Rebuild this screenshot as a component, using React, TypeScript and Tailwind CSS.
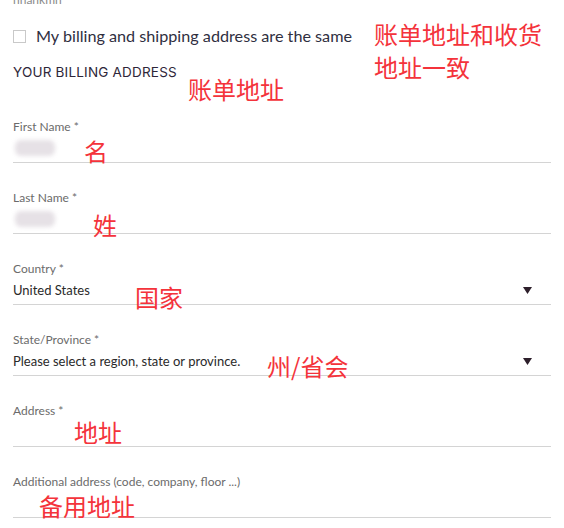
import React from 'react';

interface FieldProps {
  label: string;
  value?: string;
  select?: boolean;
  blurred?: boolean;
}

function Caret() {
  return (
    <svg width="9" height="7" viewBox="0 0 9 7" className="shrink-0">
      <path d="M0 0 H9 L4.5 7 Z" fill="#2d1f2b" />
    </svg>
  );
}

function Field({ label, value, select = false, blurred = false }: FieldProps) {
  return (
    <div className="mt-[27px] first:mt-0">
      <div className="h-4 text-[12px] leading-4 text-[#6b6b6b]">{label}</div>
      <div className="flex h-[28px] items-center justify-between border-b border-[#d4d4d4] pr-[19px]">
        {blurred ? (
          <div className="relative h-full w-[50px]">
            <div className="absolute left-[2px] top-[5px] h-[16px] w-[40px] rounded-md bg-[#e6e1e6] blur-[2px]" />
          </div>
        ) : (
          <span className="text-[13px] text-[#2a2a2a]">{value}</span>
        )}
        {select && <Caret />}
      </div>
    </div>
  );
}

function Note({ text, className }: { text: string; className: string }) {
  return (
    <span
      className={`absolute whitespace-nowrap text-[24px] leading-[28px] text-[#f4333b] ${className}`}
      style={{ fontFamily: '"Noto Sans CJK SC", sans-serif' }}
    >
      {text}
    </span>
  );
}

export default function App() {
  return (
    <div
      className="relative h-[528px] w-[564px] overflow-hidden bg-white"
      style={{ fontFamily: 'Lato, "Noto Sans", sans-serif' }}
    >
      <div className="px-[13px]">
        <div className="-mt-[7px] h-[14px] text-[12px] leading-[14px] text-[#8a8a8a]">nnankmn</div>

        <label className="mt-[19px] flex h-[20px] items-center gap-[10px]">
          <span className="h-[13px] w-[13px] border border-[#c9c9c9] bg-white" />
          <span className="text-[16.2px] text-[#2f2f3f]">My billing and shipping address are the same</span>
        </label>

        <div
          className="mt-[18px] h-[16px] text-[13.5px] leading-4 tracking-[0.2px] text-[#2e2639]"
          style={{ fontFamily: 'Inter, sans-serif' }}
        >
          YOUR BILLING ADDRESS
        </div>

        <div className="mt-[39px] w-[538px]">
          <Field label="First Name *" blurred />
          <Field label="Last Name *" blurred />
          <Field label="Country *" value="United States" select />
          <Field label="State/Province *" value="Please select a region, state or province." select />
          <Field label="Address *" />
          <Field label="Additional address (code, company, floor ...)" />
        </div>
      </div>

      <Note text="账单地址和收货" className="left-[374px] top-[20px]" />
      <Note text="地址一致" className="left-[374px] top-[53px]" />
      <Note text="账单地址" className="left-[188px] top-[75px]" />
      <Note text="名" className="left-[84px] top-[137px]" />
      <Note text="姓" className="left-[93px] top-[211px]" />
      <Note text="国家" className="left-[135px] top-[283px]" />
      <Note text="州/省会" className="left-[267px] top-[352px]" />
      <Note text="地址" className="left-[74px] top-[418px]" />
      <Note text="备用地址" className="left-[39px] top-[492px]" />
    </div>
  );
}
